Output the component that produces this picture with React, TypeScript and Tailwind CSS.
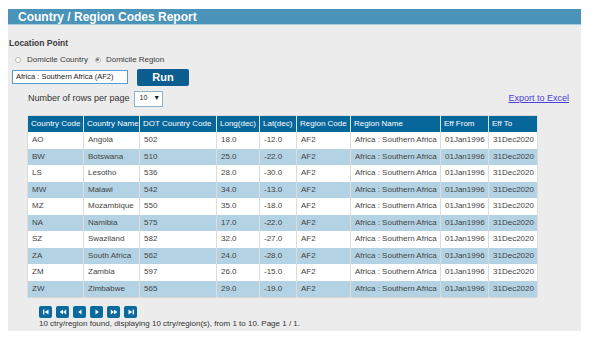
import React from 'react'

const rows = [
  ['AO', 'Angola', '502', '18.0', '-12.0'],
  ['BW', 'Botswana', '510', '25.0', '-22.0'],
  ['LS', 'Lesotho', '536', '28.0', '-30.0'],
  ['MW', 'Malawi', '542', '34.0', '-13.0'],
  ['MZ', 'Mozambique', '550', '35.0', '-18.0'],
  ['NA', 'Namibia', '575', '17.0', '-22.0'],
  ['SZ', 'Swaziland', '582', '32.0', '-27.0'],
  ['ZA', 'South Africa', '562', '24.0', '-28.0'],
  ['ZM', 'Zambia', '597', '26.0', '-15.0'],
  ['ZW', 'Zimbabwe', '565', '29.0', '-19.0'],
]

const headers = [
  { label: 'Country Code', w: 'w-[56px]' },
  { label: 'Country Name', w: 'w-[56px]' },
  { label: 'DOT Country Code', w: 'w-[77px]' },
  { label: 'Long(dec)', w: 'w-[43px]' },
  { label: 'Lat(dec)', w: 'w-[37px]' },
  { label: 'Region Code', w: 'w-[54px]' },
  { label: 'Region Name', w: 'w-[90px]' },
  { label: 'Eff From', w: 'w-[48px]' },
  { label: 'Eff To', w: 'w-[49px]' },
]

function PagerIcon({ kind }: { kind: string }) {
  // tiny white glyphs on the pager buttons
  return (
    <svg width="8" height="8" viewBox="0 0 8 8" fill="white">
      {kind === 'first' && (
        <>
          <rect x="1" y="1.5" width="1.3" height="5" />
          <polygon points="6.5,1.5 2.8,4 6.5,6.5" />
        </>
      )}
      {kind === 'rew' && (
        <>
          <polygon points="4,1.5 0.8,4 4,6.5" />
          <polygon points="7.2,1.5 4,4 7.2,6.5" />
        </>
      )}
      {kind === 'prev' && <polygon points="5.5,1.5 2.3,4 5.5,6.5" />}
      {kind === 'next' && <polygon points="2.5,1.5 5.7,4 2.5,6.5" />}
      {kind === 'ff' && (
        <>
          <polygon points="0.8,1.5 4,4 0.8,6.5" />
          <polygon points="4,1.5 7.2,4 4,6.5" />
        </>
      )}
      {kind === 'last' && (
        <>
          <polygon points="1.5,1.5 5.2,4 1.5,6.5" />
          <rect x="5.7" y="1.5" width="1.3" height="5" />
        </>
      )}
    </svg>
  )
}

export default function App() {
  return (
    <div className="w-[600px] h-[343px] bg-white pt-[9px] pl-[8px] font-['Liberation_Sans',Arial,sans-serif] overflow-hidden">
      <div className="w-[573px] h-[322px] bg-[#ececec]">
        <div className="h-[16px] bg-[#4a93b9] border-b border-[#a9cde0] pl-[10px] flex items-center">
          <span className="text-white font-bold text-[12px] leading-none">Country / Region Codes Report</span>
        </div>

        <div className="pt-[14px] pl-[1px] text-[#3a3a3a]">
          <div className="text-[8.5px] font-bold leading-none">Location Point</div>

          <div className="flex items-center mt-[8px] ml-[6px] text-[8px] leading-none">
            <span className="w-[6px] h-[6px] rounded-full border border-[#b8b8b8] bg-white" />
            <span className="ml-[6px]">Domicile Country</span>
            <span className="ml-[7px] w-[6px] h-[6px] rounded-full border border-[#b8b8b8] bg-white flex items-center justify-center">
              <span className="w-[3px] h-[3px] rounded-full bg-[#777]" />
            </span>
            <span className="ml-[5px]">Domicile Region</span>
          </div>

          <div className="flex items-center mt-[5px] ml-[3px]">
            <div className="w-[116px] h-[14px] border border-[#5b9bd5] bg-white flex items-center pl-[3px] text-[7.5px] text-[#222]">
              Africa : Southern Africa (AF2)
            </div>
            <div className="ml-[9px] w-[52px] h-[17px] rounded-[2px] bg-[#0b5e8f] text-white font-bold text-[11px] flex items-center justify-center">
              Run
            </div>
          </div>

          <div className="flex items-center mt-[5px] w-[558px]">
            <span className="ml-[19px] text-[9px] text-[#333]">Number of rows per page</span>
            <div className="ml-[4px] w-[29px] h-[16px] border border-[#8fb2cc] bg-white flex items-center pl-[5px] text-[7px] text-[#222]">
              <span>10</span>
              <span className="ml-[6px] text-[7px]">▼</span>
            </div>
            <span className="ml-auto mr-[-2px] text-[9px] text-[#4a3fd8] underline">Export to Excel</span>
          </div>

          <table className="mt-[8px] ml-[18px] border-collapse table-fixed text-[8px] border border-[#d8d8d8]">
            <thead>
              <tr className="bg-[#07679b] text-white h-[17px]">
                {headers.map((h) => (
                  <th key={h.label} className={`${h.w} font-normal text-left pl-[3px] border-x border-[#d8e6ee] leading-none whitespace-nowrap`}>
                    {h.label}
                  </th>
                ))}
              </tr>
            </thead>
            <tbody>
              {rows.map((r, i) => (
                <tr key={r[0]} className={i % 2 === 0 ? 'bg-white h-[16.5px]' : 'bg-[#b3d2e3] h-[16.5px]'}>
                  {[...r, 'AF2', 'Africa : Southern Africa', '01Jan1996', '31Dec2020'].map((c, j) => (
                    <td key={j} className="pl-[4px] border-x border-[#dcdcdc] text-[#444] leading-none whitespace-nowrap overflow-hidden">
                      {c}
                    </td>
                  ))}
                </tr>
              ))}
            </tbody>
          </table>

          <div className="flex gap-[4px] mt-[8px] ml-[30px]">
            {['first', 'rew', 'prev', 'next', 'ff', 'last'].map((k) => (
              <div key={k} className="w-[13px] h-[12px] rounded-[2px] bg-[#0b6a9c] flex items-center justify-center">
                <PagerIcon kind={k} />
              </div>
            ))}
          </div>
          <div className="ml-[30px] mt-[2px] text-[8px] text-[#333] leading-none">
            10 ctry/region found, displaying 10 ctry/region(s), from 1 to 10. Page 1 / 1.
          </div>
        </div>
      </div>
    </div>
  )
}
